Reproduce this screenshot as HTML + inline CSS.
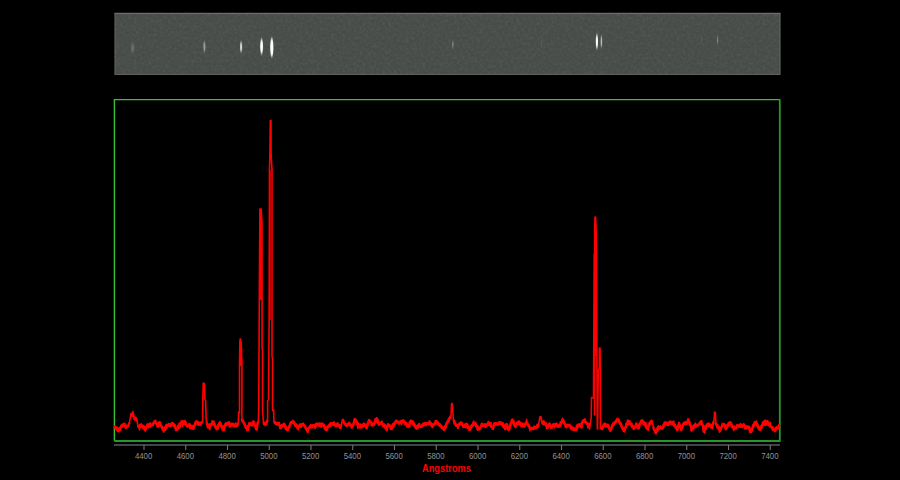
<!DOCTYPE html>
<html><head><meta charset="utf-8"><style>
html,body{margin:0;padding:0;background:#000;width:900px;height:480px;overflow:hidden}
svg{display:block}
</style></head><body>
<svg width="900" height="480" viewBox="0 0 900 480">
<defs>
<filter id="b" x="-300%" y="-100%" width="700%" height="300%"><feGaussianBlur stdDeviation="0.6 1.8"/></filter>
<filter id="n" x="0" y="0" width="100%" height="100%" color-interpolation-filters="sRGB">
<feTurbulence type="fractalNoise" baseFrequency="0.35" numOctaves="2" seed="7" result="t"/>
<feColorMatrix in="t" type="matrix" values="0 0 0 0 1  0 0 0 0 1  0 0 0 0 1  0.9 0 0 0 -0.42" result="w"/>
<feColorMatrix in="t" type="matrix" values="0 0 0 0 0  0 0 0 0 0  0 0 0 0 0  -0.9 0 0 0 0.42" result="k"/>
<feComponentTransfer in="w" result="w2"><feFuncA type="linear" slope="0.16"/></feComponentTransfer>
<feComponentTransfer in="k" result="k2"><feFuncA type="linear" slope="0.16"/></feComponentTransfer>
<feMerge><feMergeNode in="w2"/><feMergeNode in="k2"/></feMerge>
</filter>
</defs>
<rect x="0" y="0" width="900" height="480" fill="#000"/>
<rect x="114.6" y="12.9" width="665.8" height="62.1" fill="#4a4e4a"/>
<rect x="114.6" y="12.9" width="665.8" height="62.1" fill="#000" filter="url(#n)"/>
<rect x="115.1" y="13.4" width="664.8" height="61.1" fill="none" stroke="#5e625e" stroke-width="1"/>
<rect x="114.6" y="12.9" width="665.8" height="1.2" fill="#6a6e6a"/>
<ellipse cx="132.6" cy="48" rx="1.8" ry="4.5" fill="#fff" opacity="0.16" filter="url(#b)"/><ellipse cx="204.4" cy="46.8" rx="1.0" ry="5" fill="#fff" opacity="0.45" filter="url(#b)"/><ellipse cx="241.1" cy="47" rx="1.1" ry="5" fill="#fff" opacity="0.75" filter="url(#b)"/><ellipse cx="261.6" cy="46.5" rx="1.4" ry="7.5" fill="#fff" opacity="1.0" filter="url(#b)"/><ellipse cx="271.8" cy="47.5" rx="1.6" ry="9.5" fill="#fff" opacity="1.0" filter="url(#b)"/><ellipse cx="452.8" cy="44.5" rx="0.8" ry="3.5" fill="#fff" opacity="0.3" filter="url(#b)"/><ellipse cx="541.7" cy="42" rx="0.5" ry="3.5" fill="#fff" opacity="0.12" filter="url(#b)"/><ellipse cx="596.9" cy="41.5" rx="1.1" ry="7" fill="#fff" opacity="1.0" filter="url(#b)"/><ellipse cx="601.4" cy="41.5" rx="0.8" ry="5.5" fill="#fff" opacity="0.6" filter="url(#b)"/><ellipse cx="701.7" cy="40" rx="0.5" ry="3" fill="#fff" opacity="0.12" filter="url(#b)"/><ellipse cx="717.6" cy="40" rx="0.6" ry="4" fill="#fff" opacity="0.3" filter="url(#b)"/>
<path d="M114.4 441 V99.6 H780" fill="none" stroke="#36c236" stroke-width="1.4"/>
<path d="M114.4 441 H779.8 V99.6" fill="none" stroke="#289628" stroke-width="1.8"/>
<path d="M114.50 428.30 L114.92 426.56 L115.33 428.22 L115.75 427.50 L116.16 429.35 L116.57 428.20 L116.98 427.89 L117.39 430.06 L117.80 430.80 L118.22 431.27 L118.65 431.92 L119.08 429.04 L119.50 430.40 L119.92 427.70 L120.35 428.95 L120.78 427.52 L121.20 425.80 L121.73 427.37 L122.27 426.45 L122.80 425.00 L123.22 424.57 L123.65 424.05 L124.08 427.15 L124.50 423.75 L124.92 424.79 L125.33 425.57 L125.75 427.90 L126.16 426.20 L126.57 427.35 L126.98 427.08 L127.39 426.17 L127.80 426.25 L128.22 425.24 L128.65 424.70 L129.07 424.27 L129.50 422.50 L130.80 414.80 L131.35 415.62 L131.90 413.80 L132.37 414.05 L132.83 411.65 L133.30 413.80 L134.10 419.20 L134.51 419.82 L134.93 417.05 L135.34 418.32 L135.75 418.30 L136.17 417.36 L136.58 419.97 L137.00 420.80 L138.25 427.50 L138.66 426.07 L139.07 426.76 L139.48 429.96 L139.89 425.44 L140.30 425.00 L140.72 426.14 L141.13 423.68 L141.55 425.05 L141.97 426.33 L142.38 425.56 L142.80 425.80 L143.23 426.67 L143.65 426.77 L144.07 425.87 L144.50 428.18 L144.93 426.95 L145.35 430.60 L145.77 428.17 L146.20 429.20 L147.00 424.20 L147.42 425.29 L147.83 424.74 L148.25 426.14 L148.67 424.54 L149.08 426.73 L149.50 425.80 L149.92 425.52 L150.33 427.05 L150.75 426.15 L151.17 425.44 L151.58 424.20 L152.00 425.00 L152.41 425.40 L152.82 424.51 L153.24 425.40 L153.65 422.45 L154.06 423.04 L154.48 422.46 L154.89 421.66 L155.30 420.80 L155.72 422.03 L156.13 422.99 L156.55 423.03 L156.97 423.52 L157.38 425.24 L157.80 426.70 L158.23 426.26 L158.65 426.21 L159.07 424.42 L159.50 422.10 L159.92 424.26 L160.33 424.83 L160.75 425.64 L161.17 425.92 L161.58 427.53 L162.00 427.50 L162.42 430.21 L162.84 428.27 L163.26 428.41 L163.68 432.17 L164.10 430.40 L164.52 429.77 L164.94 429.73 L165.36 428.69 L165.78 425.36 L166.20 425.80 L166.61 428.52 L167.02 427.53 L167.44 425.41 L167.85 425.90 L168.26 424.95 L168.68 423.54 L169.09 424.27 L169.50 424.20 L169.92 424.50 L170.33 425.24 L170.75 424.60 L171.17 423.67 L171.58 425.08 L172.00 423.30 L172.43 422.81 L172.85 425.10 L173.27 425.91 L173.70 425.00 L174.11 425.31 L174.53 424.17 L174.94 425.88 L175.36 427.91 L175.77 428.92 L176.19 430.80 L176.60 429.60 L177.02 427.81 L177.44 428.44 L177.86 428.64 L178.28 427.09 L178.70 426.70 L179.12 423.16 L179.53 426.27 L179.95 427.37 L180.37 425.11 L180.78 422.10 L181.20 422.50 L181.60 422.21 L182.00 423.17 L182.40 426.09 L182.80 423.30 L183.22 423.63 L183.64 422.62 L184.06 423.94 L184.48 421.56 L184.90 421.25 L185.32 424.62 L185.75 422.70 L186.18 424.09 L186.60 425.80 L187.02 426.51 L187.44 427.19 L187.86 426.10 L188.28 425.52 L188.70 425.00 L189.10 423.64 L189.50 425.79 L189.90 426.74 L190.30 428.30 L190.73 427.03 L191.15 427.75 L191.57 426.02 L192.00 425.80 L192.42 427.73 L192.83 427.87 L193.25 428.75 L193.66 427.26 L194.07 426.71 L194.48 425.99 L194.89 425.42 L195.30 423.30 L195.72 422.53 L196.13 422.62 L196.55 421.06 L196.97 424.42 L197.38 424.04 L197.80 422.10 L198.23 422.41 L198.65 422.58 L199.07 422.19 L199.50 424.20 L199.93 423.98 L200.35 423.60 L200.77 425.54 L201.20 422.50 L201.63 422.63 L202.07 421.23 L202.50 422.00 L202.65 421.00 L202.80 399.00 L203.20 383.00 L204.50 384.00 L204.80 399.00 L205.70 401.00 L205.90 413.00 L206.50 423.00 L206.94 421.19 L207.38 426.94 L207.81 426.60 L208.25 427.50 L208.66 425.07 L209.07 426.72 L209.48 424.07 L209.89 429.68 L210.30 425.00 L210.72 425.93 L211.13 424.85 L211.55 423.54 L211.97 420.77 L212.38 422.76 L212.80 422.50 L213.23 421.06 L213.65 424.07 L214.07 421.21 L214.50 424.20 L214.93 423.94 L215.35 427.31 L215.77 428.65 L216.20 427.50 L216.60 426.50 L217.00 426.49 L217.40 428.75 L217.82 428.76 L218.23 427.69 L218.65 424.44 L219.07 423.75 L219.48 422.71 L219.90 422.50 L220.32 422.07 L220.74 423.68 L221.16 427.00 L221.58 427.33 L222.00 427.50 L222.42 430.53 L222.83 428.53 L223.25 429.20 L223.66 428.20 L224.07 426.34 L224.48 426.53 L224.89 424.26 L225.30 425.00 L225.72 422.52 L226.13 425.14 L226.55 425.68 L226.97 424.60 L227.38 424.85 L227.80 422.90 L228.22 423.69 L228.63 423.00 L229.05 424.45 L229.47 424.38 L229.88 423.98 L230.30 425.80 L230.73 423.57 L231.15 423.62 L231.57 425.19 L232.00 425.00 L232.42 425.18 L232.83 424.43 L233.25 426.71 L233.67 425.21 L234.08 425.70 L234.50 425.00 L234.92 426.60 L235.33 424.28 L235.75 423.04 L236.17 426.44 L236.58 424.84 L237.00 425.80 L237.43 426.44 L237.87 424.34 L238.30 423.00 L238.60 413.00 L239.50 412.00 L239.50 366.00 L239.80 345.00 L240.10 339.00 L240.50 339.00 L241.40 345.00 L241.90 366.00 L241.90 419.00 L242.33 420.54 L242.77 420.58 L243.20 420.00 L243.40 423.50 L243.88 421.58 L244.35 425.51 L244.83 424.42 L245.30 425.80 L245.72 425.73 L246.14 426.96 L246.56 429.24 L246.98 430.22 L247.40 430.00 L247.82 430.05 L248.24 425.69 L248.66 425.81 L249.08 422.51 L249.50 424.20 L249.92 424.24 L250.34 425.24 L250.76 423.76 L251.18 425.13 L251.60 425.00 L252.02 424.79 L252.43 425.24 L252.85 422.56 L253.27 422.07 L253.68 421.67 L254.10 422.10 L254.52 425.62 L254.94 426.25 L255.36 426.21 L255.78 428.05 L256.20 429.20 L256.61 427.84 L257.02 426.44 L257.43 424.45 L257.84 422.80 L258.25 421.70 L258.75 406.00 L259.30 300.00 L259.90 209.00 L261.20 209.00 L262.00 225.00 L262.10 349.00 L262.50 350.00 L262.50 412.00 L263.50 422.00 L264.10 424.20 L264.51 422.47 L264.93 422.98 L265.34 425.51 L265.75 423.30 L266.16 423.12 L266.57 421.73 L266.99 420.57 L267.40 420.00 L267.60 418.00 L267.60 401.00 L268.50 400.00 L268.85 357.00 L269.15 320.00 L269.50 170.00 L269.90 153.00 L270.30 120.50 L271.00 120.50 L271.05 153.00 L272.00 170.00 L272.00 357.00 L272.50 358.00 L272.50 410.00 L273.10 410.58 L273.70 411.00 L273.90 422.00 L274.10 422.50 L274.52 423.26 L274.94 422.40 L275.36 423.76 L275.78 424.15 L276.20 424.20 L276.62 423.30 L277.03 423.25 L277.45 423.00 L277.87 422.92 L278.28 425.27 L278.70 424.20 L279.10 422.39 L279.50 425.93 L279.90 426.54 L280.30 428.30 L280.73 427.04 L281.15 427.39 L281.57 428.12 L282.00 426.34 L282.43 425.57 L282.85 424.49 L283.27 424.56 L283.70 424.20 L284.11 425.94 L284.52 425.02 L284.93 424.76 L285.34 425.26 L285.76 426.09 L286.17 426.40 L286.58 430.03 L286.99 429.78 L287.40 430.00 L287.81 428.89 L288.23 430.09 L288.64 426.72 L289.06 427.59 L289.47 426.82 L289.89 423.17 L290.30 424.20 L290.73 421.71 L291.15 421.84 L291.57 423.41 L292.00 421.70 L292.43 423.26 L292.85 420.23 L293.27 422.96 L293.70 421.70 L294.10 422.27 L294.50 423.28 L294.90 424.11 L295.30 425.80 L295.73 425.52 L296.15 423.84 L296.57 424.94 L297.00 424.77 L297.43 426.95 L297.85 428.98 L298.27 429.87 L298.70 426.70 L299.11 425.98 L299.52 424.01 L299.94 425.27 L300.35 424.32 L300.76 427.52 L301.18 425.51 L301.59 423.64 L302.00 424.20 L302.42 425.59 L302.83 425.38 L303.25 423.05 L303.67 424.63 L304.08 425.25 L304.50 425.80 L304.93 426.67 L305.35 427.66 L305.77 427.94 L306.20 429.20 L306.60 430.25 L307.00 430.15 L307.40 430.60 L307.80 432.50 L309.10 426.70 L309.51 428.52 L309.93 427.13 L310.34 427.23 L310.76 424.79 L311.17 426.50 L311.59 427.68 L312.00 426.70 L312.42 425.00 L312.83 427.72 L313.25 425.78 L313.67 426.58 L314.08 425.79 L314.50 425.80 L314.92 425.80 L315.33 426.71 L315.75 424.52 L316.17 426.61 L316.58 423.53 L317.00 424.20 L317.41 423.18 L317.82 425.25 L318.24 423.22 L318.65 424.16 L319.06 425.79 L319.48 426.25 L319.89 422.77 L320.30 425.00 L320.73 425.61 L321.15 427.26 L321.57 426.43 L322.00 424.71 L322.43 424.28 L322.85 424.64 L323.27 423.62 L323.70 425.00 L324.10 425.73 L324.50 426.88 L324.90 427.98 L325.30 429.20 L325.72 430.34 L326.13 428.36 L326.55 426.60 L326.97 429.33 L327.38 426.50 L327.80 427.50 L328.22 426.38 L328.63 426.17 L329.05 425.34 L329.47 423.96 L329.88 424.28 L330.30 424.00 L330.72 426.49 L331.13 423.01 L331.55 423.44 L331.97 424.82 L332.38 424.23 L332.80 423.20 L333.22 424.42 L333.63 424.83 L334.05 421.74 L334.47 423.36 L334.88 424.85 L335.30 425.00 L335.73 425.60 L336.15 426.55 L336.57 425.56 L337.00 424.71 L337.43 425.05 L337.85 424.75 L338.27 425.30 L338.70 425.00 L339.12 426.09 L339.53 425.16 L339.95 424.87 L340.37 425.11 L340.78 427.73 L341.20 426.70 L342.40 419.60 L342.82 421.86 L343.25 422.24 L343.68 422.80 L344.10 422.50 L344.70 424.35 L345.30 424.20 L345.73 424.60 L346.15 425.80 L346.57 424.14 L347.00 425.80 L347.42 425.14 L347.83 424.09 L348.25 425.42 L348.67 423.44 L349.08 423.59 L349.50 423.30 L349.92 424.48 L350.33 426.33 L350.75 424.45 L351.17 424.97 L351.58 427.78 L352.00 427.50 L352.42 425.34 L352.83 426.38 L353.25 425.00 L353.66 422.87 L354.07 421.97 L354.49 418.46 L354.90 419.20 L355.32 420.72 L355.74 419.92 L356.16 420.10 L356.58 424.33 L357.00 422.50 L357.43 424.18 L357.85 428.36 L358.27 425.46 L358.70 425.80 L359.12 425.53 L359.53 426.23 L359.95 428.18 L360.37 426.37 L360.78 427.09 L361.20 426.70 L361.61 427.01 L362.02 424.98 L362.44 425.92 L362.85 424.85 L363.26 423.64 L363.68 425.87 L364.09 425.31 L364.50 424.20 L364.92 425.11 L365.34 424.75 L365.76 424.25 L366.18 428.06 L366.60 428.30 L367.02 426.80 L367.43 423.51 L367.85 424.08 L368.27 420.94 L368.68 421.35 L369.10 420.00 L369.52 420.83 L369.94 421.75 L370.36 422.24 L370.78 422.85 L371.20 423.30 L371.62 422.22 L372.03 423.41 L372.45 423.54 L372.87 424.15 L373.28 425.04 L373.70 425.00 L374.11 424.79 L374.53 425.05 L374.94 419.05 L375.36 421.65 L375.77 419.98 L376.19 421.99 L376.60 418.30 L377.02 420.60 L377.44 418.68 L377.86 422.32 L378.28 422.40 L378.70 424.20 L379.12 425.11 L379.53 422.37 L379.95 423.23 L380.37 422.91 L380.78 422.67 L381.20 422.50 L381.62 422.22 L382.03 421.13 L382.45 424.30 L382.87 425.37 L383.28 424.50 L383.70 425.00 L384.12 424.20 L384.53 426.08 L384.95 426.93 L385.37 426.46 L385.78 427.07 L386.20 427.50 L386.62 428.77 L387.03 425.32 L387.45 425.58 L387.87 423.55 L388.28 424.58 L388.70 425.00 L389.12 424.66 L389.53 424.95 L389.95 425.82 L390.37 429.36 L390.78 427.51 L391.20 428.30 L391.62 427.48 L392.03 429.57 L392.45 426.18 L392.87 423.49 L393.28 425.37 L393.70 424.20 L394.11 422.71 L394.52 425.43 L394.94 421.60 L395.35 422.03 L395.76 420.43 L396.18 422.10 L396.59 420.40 L397.00 421.25 L397.42 421.51 L397.83 421.48 L398.25 421.54 L398.67 423.75 L399.08 424.08 L399.50 423.30 L399.91 423.06 L400.32 421.59 L400.74 421.08 L401.15 422.37 L401.56 424.61 L401.98 420.88 L402.39 420.17 L402.80 420.80 L403.23 420.39 L403.65 420.34 L404.07 420.91 L404.50 422.25 L404.93 424.65 L405.35 423.35 L405.77 423.16 L406.20 424.20 L406.62 422.68 L407.03 425.29 L407.45 425.42 L407.87 424.39 L408.28 424.98 L408.70 426.70 L409.12 425.67 L409.53 425.95 L409.95 424.50 L410.37 423.01 L410.78 421.40 L411.20 420.80 L411.62 421.60 L412.03 421.62 L412.45 424.66 L412.87 421.11 L413.28 422.44 L413.70 423.30 L414.12 425.66 L414.53 424.65 L414.95 427.51 L415.37 426.58 L415.78 427.64 L416.20 428.30 L416.62 427.31 L417.03 425.54 L417.45 425.49 L417.87 428.76 L418.28 426.32 L418.70 425.00 L419.12 426.01 L419.53 426.71 L419.95 426.53 L420.37 427.36 L420.78 426.10 L421.20 426.70 L421.62 426.02 L422.03 427.05 L422.45 425.03 L422.87 423.44 L423.28 424.35 L423.70 424.20 L424.11 423.43 L424.52 424.71 L424.94 423.00 L425.35 422.48 L425.76 423.24 L426.18 425.39 L426.59 423.35 L427.00 423.30 L427.41 423.39 L427.82 423.11 L428.24 423.35 L428.65 424.01 L429.06 424.47 L429.48 420.73 L429.89 424.23 L430.30 422.50 L430.72 423.05 L431.13 423.22 L431.55 427.03 L431.97 424.50 L432.38 427.58 L432.80 425.80 L433.22 426.55 L433.64 423.74 L434.06 425.16 L434.48 425.04 L434.90 423.60 L435.32 420.55 L435.74 422.52 L436.16 422.29 L436.58 420.78 L437.00 421.70 L437.43 424.52 L437.85 422.66 L438.27 423.10 L438.70 424.20 L439.12 424.26 L439.53 424.09 L439.95 424.52 L440.37 425.98 L440.78 426.66 L441.20 426.70 L441.61 426.56 L442.03 427.53 L442.44 426.45 L442.86 429.21 L443.27 428.16 L443.69 429.79 L444.10 430.00 L444.51 427.84 L444.93 427.24 L445.34 427.04 L445.76 424.26 L446.17 427.61 L446.59 423.53 L447.00 422.50 L447.42 421.71 L447.83 420.22 L448.25 422.31 L448.67 421.36 L449.08 419.36 L449.50 418.30 L450.00 416.12 L450.50 416.63 L451.00 416.70 L451.60 403.30 L452.40 404.20 L452.80 411.70 L453.70 421.70 L454.12 423.12 L454.53 422.45 L454.95 422.33 L455.37 423.01 L455.78 424.19 L456.20 425.80 L456.62 425.68 L457.03 424.75 L457.45 425.42 L457.87 428.62 L458.28 427.26 L458.70 425.00 L459.12 423.34 L459.53 424.58 L459.95 423.85 L460.37 423.17 L460.78 424.17 L461.20 422.50 L461.62 422.80 L462.03 423.51 L462.45 424.15 L462.87 425.18 L463.28 427.54 L463.70 426.70 L464.12 427.21 L464.53 424.26 L464.95 424.92 L465.37 424.08 L465.78 425.60 L466.20 424.20 L466.61 425.19 L467.02 426.72 L467.44 426.30 L467.85 424.81 L468.26 428.37 L468.68 428.82 L469.09 429.88 L469.50 430.00 L469.92 427.60 L470.33 428.43 L470.75 426.67 L471.17 425.84 L471.58 426.26 L472.00 425.00 L472.41 425.18 L472.83 423.44 L473.24 422.22 L473.66 421.06 L474.07 423.10 L474.49 424.89 L474.90 423.30 L475.32 424.07 L475.74 422.28 L476.16 424.78 L476.58 427.17 L477.00 427.50 L477.42 429.79 L477.83 429.47 L478.25 428.79 L478.67 428.87 L479.08 427.65 L479.50 429.20 L479.91 427.94 L480.33 427.37 L480.74 426.13 L481.16 426.42 L481.57 425.16 L481.99 425.32 L482.40 424.20 L482.81 426.28 L483.23 425.80 L483.64 425.77 L484.06 425.34 L484.47 424.16 L484.89 426.21 L485.30 426.70 L485.73 426.83 L486.15 424.44 L486.57 426.63 L487.00 424.20 L487.43 424.52 L487.85 423.16 L488.27 421.52 L488.70 422.50 L489.12 425.68 L489.53 422.51 L489.95 425.70 L490.37 424.63 L490.78 426.33 L491.20 426.70 L491.60 426.13 L492.00 427.00 L492.40 429.00 L492.80 428.30 L493.23 429.38 L493.65 424.78 L494.07 424.56 L494.50 423.30 L494.92 424.59 L495.33 422.84 L495.75 424.60 L496.17 422.96 L496.58 424.77 L497.00 424.20 L497.42 424.54 L497.83 425.28 L498.25 424.07 L498.67 422.01 L499.08 424.05 L499.50 421.74 L499.92 423.78 L500.33 424.50 L500.75 422.50 L501.17 423.57 L501.59 422.55 L502.01 425.00 L502.44 424.13 L502.86 422.79 L503.28 424.22 L503.70 425.00 L504.10 427.75 L504.50 426.74 L504.90 428.30 L505.30 429.20 L505.73 427.12 L506.17 423.84 L506.60 424.20 L507.02 424.75 L507.44 426.95 L507.86 427.93 L508.28 428.63 L508.70 430.00 L509.11 426.10 L509.52 428.79 L509.93 426.84 L510.34 425.87 L510.75 423.30 L511.16 423.94 L511.57 420.92 L511.99 419.80 L512.40 419.60 L512.81 420.99 L513.23 423.64 L513.64 420.62 L514.06 423.38 L514.47 423.81 L514.89 426.36 L515.30 426.70 L515.72 427.62 L516.14 424.66 L516.56 422.69 L516.98 423.40 L517.40 422.50 L517.81 422.40 L518.23 421.13 L518.64 424.29 L519.06 422.84 L519.47 424.53 L519.89 422.38 L520.30 424.20 L520.72 425.72 L521.15 422.87 L521.58 426.06 L522.00 422.83 L522.42 426.86 L522.85 424.95 L523.28 423.73 L523.70 425.80 L524.11 425.11 L524.53 425.38 L524.94 423.37 L525.35 423.56 L525.76 424.06 L526.17 423.12 L526.59 419.23 L527.00 422.50 L527.42 422.82 L527.83 424.68 L528.25 425.36 L528.67 427.04 L529.08 425.84 L529.50 427.50 L529.92 430.70 L530.33 428.73 L530.75 428.27 L531.17 429.34 L531.58 429.31 L532.00 428.30 L532.42 428.42 L532.83 427.56 L533.25 429.53 L533.67 428.81 L534.08 426.03 L534.50 428.30 L534.92 426.71 L535.33 428.33 L535.75 427.63 L536.17 427.57 L536.58 427.74 L537.00 426.70 L537.42 426.25 L537.85 427.35 L538.28 424.12 L538.70 424.20 L539.90 416.70 L540.33 417.05 L540.77 418.75 L541.20 419.20 L542.00 423.30 L542.42 424.03 L542.84 423.93 L543.26 424.61 L543.68 422.09 L544.10 422.50 L544.52 424.56 L544.94 424.38 L545.36 423.23 L545.78 424.98 L546.20 425.80 L546.61 428.72 L547.02 427.58 L547.43 426.50 L547.84 424.60 L548.25 427.90 L549.10 423.30 L549.51 423.02 L549.93 423.66 L550.34 425.19 L550.76 428.47 L551.17 427.20 L551.59 427.28 L552.00 427.50 L552.42 425.55 L552.85 424.43 L553.28 424.78 L553.70 424.20 L554.11 423.74 L554.53 428.01 L554.94 424.01 L555.35 423.86 L555.76 426.05 L556.17 424.89 L556.59 423.42 L557.00 425.00 L557.42 426.97 L557.85 425.48 L558.28 424.68 L558.70 426.70 L559.12 426.52 L559.53 426.15 L559.95 424.59 L560.37 425.27 L560.78 424.85 L561.20 423.30 L561.61 421.58 L562.02 419.51 L562.43 418.45 L562.84 420.51 L563.25 420.00 L563.66 422.53 L564.08 423.30 L564.49 424.82 L564.90 424.20 L565.33 427.26 L565.77 425.89 L566.20 426.70 L566.62 427.68 L567.03 424.30 L567.45 426.68 L567.87 426.04 L568.28 425.17 L568.70 425.00 L569.12 424.89 L569.53 424.49 L569.95 426.42 L570.37 428.20 L570.78 426.64 L571.20 427.50 L571.61 428.39 L572.02 427.20 L572.43 428.55 L572.84 427.29 L573.25 429.20 L573.66 428.74 L574.07 429.63 L574.48 428.77 L574.89 428.34 L575.30 430.00 L575.72 429.08 L576.15 430.19 L576.58 430.32 L577.00 427.51 L577.42 428.33 L577.85 427.76 L578.28 426.80 L578.70 425.80 L579.11 423.84 L579.53 425.99 L579.94 424.34 L580.35 426.81 L580.76 426.25 L581.17 425.94 L581.59 422.06 L582.00 425.00 L582.80 420.00 L583.22 421.03 L583.63 421.41 L584.05 419.32 L584.47 422.30 L584.88 421.51 L585.30 421.70 L585.72 421.98 L586.14 421.84 L586.56 421.98 L586.98 423.18 L587.40 424.20 L587.83 427.60 L588.27 423.84 L588.70 423.30 L589.50 429.00 L591.20 418.00 L591.50 397.50 L593.50 398.00 L594.20 254.00 L594.30 356.00 L594.50 415.00 L594.70 231.00 L595.00 217.00 L595.60 217.00 L596.10 231.00 L596.50 254.00 L596.85 356.00 L597.30 429.00 L597.60 429.00 L598.30 370.00 L599.30 368.00 L599.35 348.00 L600.00 348.00 L600.40 368.00 L600.50 427.00 L600.90 427.75 L601.30 427.22 L601.70 427.76 L602.10 429.00 L602.52 427.38 L602.94 426.02 L603.36 427.17 L603.78 424.84 L604.20 424.20 L604.62 425.37 L605.03 423.08 L605.45 425.71 L605.87 424.70 L606.28 425.67 L606.70 425.00 L607.11 425.22 L607.52 424.61 L607.93 427.47 L608.34 425.84 L608.75 426.70 L609.16 427.55 L609.58 427.69 L609.99 430.02 L610.40 430.80 L610.82 429.17 L611.24 428.82 L611.66 427.73 L612.08 425.33 L612.50 425.00 L612.92 422.89 L613.33 424.69 L613.75 424.85 L614.17 424.17 L614.58 421.54 L615.00 422.50 L615.41 422.87 L615.83 422.25 L616.24 421.77 L616.66 421.59 L617.07 420.33 L617.49 420.61 L617.90 420.00 L618.32 421.77 L618.74 420.71 L619.16 420.25 L619.58 422.51 L620.00 423.30 L620.42 424.39 L620.85 422.79 L621.28 425.04 L621.70 426.70 L622.12 428.09 L622.53 427.89 L622.95 428.86 L623.37 427.92 L623.78 431.20 L624.20 430.80 L624.61 431.87 L625.03 428.49 L625.44 426.81 L625.85 425.26 L626.26 426.68 L626.67 424.70 L627.09 422.58 L627.50 422.50 L627.92 424.09 L628.33 423.68 L628.75 423.62 L629.17 420.92 L629.58 423.04 L630.00 423.30 L630.42 424.62 L630.83 422.96 L631.25 426.11 L631.67 427.28 L632.08 427.37 L632.50 426.70 L632.92 426.15 L633.34 426.49 L633.76 428.79 L634.18 429.17 L634.60 428.30 L635.80 423.30 L636.22 425.78 L636.64 426.74 L637.06 426.18 L637.48 426.81 L637.90 428.30 L638.32 425.24 L638.74 427.57 L639.17 428.53 L639.59 424.41 L640.01 423.56 L640.43 424.08 L640.86 422.92 L641.28 419.99 L641.70 420.80 L642.11 420.26 L642.53 420.11 L642.94 424.16 L643.35 421.19 L643.76 423.39 L644.17 424.98 L644.59 425.26 L645.00 423.30 L645.42 425.99 L645.83 427.22 L646.25 424.77 L646.67 426.82 L647.08 427.34 L647.50 429.20 L647.92 427.74 L648.33 430.11 L648.75 423.84 L649.17 425.40 L649.58 422.13 L650.00 422.50 L650.42 423.77 L650.84 423.38 L651.26 420.87 L651.68 423.62 L652.10 420.80 L653.30 426.70 L653.72 427.89 L654.13 430.46 L654.55 430.37 L654.97 430.43 L655.38 431.74 L655.80 433.30 L656.22 431.91 L656.65 431.54 L657.08 429.70 L657.50 428.30 L657.92 431.00 L658.33 427.80 L658.75 427.34 L659.17 426.90 L659.58 426.70 L660.00 427.50 L660.42 425.91 L660.83 426.58 L661.25 428.99 L661.67 428.11 L662.08 427.96 L662.50 428.30 L662.92 427.75 L663.33 427.65 L663.75 426.14 L664.17 425.36 L664.58 422.80 L665.00 422.50 L665.42 422.60 L665.83 422.40 L666.25 423.63 L666.67 423.19 L667.08 424.14 L667.50 425.00 L667.92 424.24 L668.33 423.64 L668.75 423.03 L669.17 422.21 L669.58 423.82 L670.00 421.70 L670.42 421.71 L670.83 421.32 L671.25 423.18 L671.67 422.06 L672.08 422.50 L672.50 424.20 L672.92 424.57 L673.33 422.73 L673.75 421.14 L674.17 425.61 L674.58 426.77 L675.00 425.80 L675.42 424.63 L675.84 426.40 L676.26 429.01 L676.68 426.78 L677.10 430.00 L677.52 427.61 L677.94 425.88 L678.36 425.74 L678.78 422.27 L679.20 423.30 L679.61 425.71 L680.02 425.81 L680.43 427.68 L680.84 428.27 L681.25 430.00 L681.66 426.29 L682.07 427.50 L682.48 424.91 L682.89 425.37 L683.30 424.20 L683.72 423.03 L684.13 423.52 L684.55 423.50 L684.97 424.53 L685.38 424.37 L685.80 423.30 L686.22 421.74 L686.64 422.57 L687.06 423.98 L687.49 422.46 L687.91 420.64 L688.33 421.01 L688.75 420.80 L689.16 421.43 L689.58 424.03 L689.99 423.99 L690.40 425.00 L690.83 427.12 L691.27 430.99 L691.70 430.00 L692.12 427.65 L692.53 427.38 L692.95 425.82 L693.37 425.29 L693.78 427.53 L694.20 425.80 L694.61 426.05 L695.03 427.56 L695.44 423.13 L695.85 424.34 L696.26 427.03 L696.67 426.44 L697.09 426.16 L697.50 425.00 L697.91 425.63 L698.33 424.21 L698.74 423.75 L699.15 423.39 L699.56 423.95 L699.97 422.33 L700.39 422.50 L700.80 421.70 L701.22 424.27 L701.65 422.00 L702.08 423.27 L702.50 425.00 L702.92 427.35 L703.35 428.03 L703.78 429.84 L704.20 431.70 L704.62 433.10 L705.03 429.97 L705.45 427.85 L705.87 428.55 L706.28 429.14 L706.70 425.00 L707.12 423.54 L707.53 423.93 L707.95 424.74 L708.37 423.70 L708.78 426.94 L709.20 424.20 L709.62 425.38 L710.03 424.82 L710.45 426.44 L710.87 425.44 L711.28 426.22 L711.70 427.50 L712.11 426.63 L712.52 428.37 L712.93 421.80 L713.34 424.00 L713.75 422.50 L714.60 412.10 L715.40 413.30 L715.80 422.50 L716.22 425.09 L716.63 425.32 L717.05 427.71 L717.47 426.91 L717.88 427.51 L718.30 428.30 L718.72 428.77 L719.15 428.52 L719.58 432.14 L720.00 430.80 L720.42 428.36 L720.85 428.60 L721.28 427.10 L721.70 426.70 L722.12 425.34 L722.53 423.20 L722.95 424.99 L723.37 425.20 L723.78 424.79 L724.20 424.20 L724.73 426.88 L725.27 427.34 L725.80 429.20 L726.22 427.75 L726.64 428.21 L727.06 427.96 L727.48 425.40 L727.90 425.80 L728.32 423.32 L728.74 423.25 L729.16 425.09 L729.58 424.36 L730.00 422.50 L730.42 422.14 L730.83 424.03 L731.25 425.61 L731.67 426.89 L732.08 425.21 L732.50 426.70 L732.92 426.68 L733.33 428.92 L733.75 430.39 L734.17 429.60 L734.58 426.66 L735.00 428.30 L735.42 428.29 L735.83 426.84 L736.25 426.58 L736.67 425.30 L737.08 424.97 L737.50 425.00 L737.92 425.12 L738.33 427.43 L738.75 426.24 L739.17 426.05 L739.58 425.70 L740.00 425.80 L740.41 424.80 L740.83 425.32 L741.24 426.99 L741.65 426.40 L742.06 427.66 L742.47 425.51 L742.89 425.08 L743.30 425.00 L743.72 423.61 L744.13 426.58 L744.55 424.58 L744.97 429.03 L745.38 426.99 L745.80 428.30 L746.22 428.03 L746.63 426.15 L747.05 426.90 L747.47 426.12 L747.88 428.32 L748.30 426.70 L748.72 427.71 L749.14 426.71 L749.56 426.53 L749.99 429.48 L750.41 429.69 L750.83 429.65 L751.25 431.70 L751.66 431.07 L752.07 428.80 L752.48 427.81 L752.89 425.63 L753.30 425.00 L753.72 423.90 L754.13 423.61 L754.55 421.83 L754.97 424.09 L755.38 423.40 L755.80 422.50 L756.22 421.13 L756.63 424.02 L757.05 425.99 L757.47 425.58 L757.88 427.56 L758.30 426.70 L758.72 427.20 L759.15 428.35 L759.58 427.62 L760.00 430.00 L760.42 427.95 L760.83 425.88 L761.25 426.03 L761.67 426.43 L762.08 425.79 L762.50 424.20 L762.92 425.41 L763.33 423.98 L763.75 422.45 L764.17 423.96 L764.58 423.08 L765.00 425.21 L765.42 425.23 L765.83 423.84 L766.25 422.50 L766.67 421.38 L767.09 422.36 L767.51 423.46 L767.94 422.62 L768.36 424.34 L768.78 424.78 L769.20 424.20 L769.62 425.76 L770.03 425.57 L770.45 424.79 L770.87 425.39 L771.28 426.80 L771.70 427.50 L772.11 429.46 L772.53 430.11 L772.94 429.76 L773.35 429.39 L773.76 430.12 L774.17 430.66 L774.59 431.59 L775.00 430.40 L775.42 430.81 L775.83 427.32 L776.25 429.69 L776.67 428.40 L777.08 426.76 L777.50 426.70 L777.90 427.33 L778.30 427.05 L778.70 426.64 L779.10 424.67 L779.50 426.70" fill="none" stroke="#ff0000" stroke-width="1.6" stroke-linejoin="round"/>
<g fill="#ff0000"><rect x="259.5" y="215" width="2.3" height="85"/><rect x="270.0" y="170" width="1.3" height="150" fill="#c00000"/><rect x="594.5" y="231" width="2.1" height="125"/><rect x="239.5" y="341" width="2" height="25"/></g>
<path d="M114.50 428.30 L115.12 426.84 L115.75 427.50 L116.26 427.29 L116.78 429.75 L117.29 427.91 L117.80 430.80 L118.37 430.54 L118.93 428.50 L119.50 430.40 L120.07 429.86 L120.63 427.52 L121.20 425.80 L121.73 426.75 L122.27 424.81 L122.80 425.00 L123.37 424.94 L123.93 423.91 L124.50 423.75 L125.12 425.16 L125.75 427.90 L126.26 427.62 L126.78 425.94 L127.29 426.34 L127.80 426.25 L128.37 425.63 L128.93 423.80 L129.50 422.50M130.80 414.80 L131.35 413.93 L131.90 413.80 L132.60 415.77 L133.30 413.80M134.10 419.20 L134.65 418.95 L135.20 418.07 L135.75 418.30 L136.38 419.69 L137.00 420.80M138.25 427.50 L138.76 426.40 L139.28 425.90 L139.79 425.31 L140.30 425.00 L140.80 426.98 L141.30 425.34 L141.80 425.64 L142.30 426.25 L142.80 425.80 L143.37 428.18 L143.93 426.73 L144.50 426.94 L145.07 430.29 L145.63 427.32 L146.20 429.20M147.00 424.20 L147.50 424.19 L148.00 425.44 L148.50 427.22 L149.00 424.63 L149.50 425.80 L150.00 423.46 L150.50 426.08 L151.00 424.85 L151.50 424.81 L152.00 425.00 L152.55 424.72 L153.10 423.80 L153.65 423.16 L154.20 421.81 L154.75 422.66 L155.30 420.80 L155.80 423.33 L156.30 423.19 L156.80 423.93 L157.30 426.18 L157.80 426.70 L158.37 425.60 L158.93 422.70 L159.50 422.10 L160.00 422.77 L160.50 425.20 L161.00 425.25 L161.50 426.12 L162.00 427.50 L162.53 428.42 L163.05 428.92 L163.57 429.67 L164.10 430.40 L164.62 427.51 L165.15 429.67 L165.67 427.13 L166.20 425.80 L166.75 424.74 L167.30 426.15 L167.85 425.28 L168.40 424.75 L168.95 425.41 L169.50 424.20 L170.00 426.05 L170.50 424.34 L171.00 425.09 L171.50 425.42 L172.00 423.30 L172.57 422.95 L173.13 423.96 L173.70 425.00 L174.28 426.62 L174.86 425.30 L175.44 427.52 L176.02 429.84 L176.60 429.60 L177.12 429.81 L177.65 428.67 L178.17 425.72 L178.70 426.70 L179.20 427.98 L179.70 425.52 L180.20 424.87 L180.70 423.79 L181.20 422.50 L181.73 421.22 L182.27 421.74 L182.80 423.30 L183.33 421.69 L183.85 424.00 L184.38 421.01 L184.90 421.25 L185.47 422.55 L186.03 424.05 L186.60 425.80 L187.12 426.11 L187.65 425.85 L188.17 425.44 L188.70 425.00 L189.23 424.96 L189.77 424.38 L190.30 428.30 L190.87 427.62 L191.43 426.87 L192.00 425.80 L192.62 428.38 L193.25 428.75 L193.76 427.29 L194.28 425.47 L194.79 425.03 L195.30 423.30 L195.80 421.66 L196.30 421.88 L196.80 421.67 L197.30 422.60 L197.80 422.10 L198.37 424.68 L198.93 424.19 L199.50 424.20 L200.07 424.66 L200.63 423.28 L201.20 422.50 L201.85 422.50 L202.50 422.00M206.50 423.00 L207.08 424.10 L207.67 425.75 L208.25 427.50 L208.76 424.69 L209.28 425.17 L209.79 424.47 L210.30 425.00 L210.80 425.25 L211.30 424.60 L211.80 424.53 L212.30 424.40 L212.80 422.50 L213.37 422.79 L213.93 424.58 L214.50 424.20 L215.07 427.06 L215.63 426.39 L216.20 427.50 L216.80 429.10 L217.40 428.75 L217.90 427.35 L218.40 424.80 L218.90 425.11 L219.40 423.01 L219.90 422.50 L220.43 423.85 L220.95 424.58 L221.47 426.54 L222.00 427.50 L222.62 426.43 L223.25 429.20 L223.76 430.03 L224.28 428.32 L224.79 425.73 L225.30 425.00 L225.80 423.76 L226.30 424.16 L226.80 424.35 L227.30 423.70 L227.80 422.90 L228.30 423.84 L228.80 422.29 L229.30 423.62 L229.80 426.43 L230.30 425.80 L230.87 425.75 L231.43 423.90 L232.00 425.00 L232.50 424.22 L233.00 423.70 L233.50 424.08 L234.00 426.06 L234.50 425.00 L235.00 424.96 L235.50 426.34 L236.00 425.65 L236.50 424.27 L237.00 425.80 L237.65 423.81 L238.30 423.00M238.60 413.00 L239.50 412.00M241.90 419.00 L242.55 421.59 L243.20 420.00M243.40 423.50 L244.03 423.57 L244.67 424.07 L245.30 425.80 L245.83 427.98 L246.35 427.98 L246.88 428.94 L247.40 430.00 L247.93 429.89 L248.45 425.49 L248.97 426.03 L249.50 424.20 L250.03 423.43 L250.55 423.31 L251.07 424.05 L251.60 425.00 L252.10 425.48 L252.60 423.71 L253.10 421.58 L253.60 421.66 L254.10 422.10 L254.62 425.28 L255.15 426.59 L255.67 426.42 L256.20 429.20 L256.71 429.55 L257.23 425.11 L257.74 422.48 L258.25 421.70M263.50 422.00 L264.10 424.20 L264.65 423.77 L265.20 424.46 L265.75 423.30 L266.30 423.68 L266.85 422.05 L267.40 420.00M272.50 410.00 L273.10 410.11 L273.70 411.00M274.10 422.50 L274.62 422.41 L275.15 422.01 L275.68 423.71 L276.20 424.20 L276.70 423.65 L277.20 424.43 L277.70 423.03 L278.20 423.72 L278.70 424.20 L279.23 424.76 L279.77 425.83 L280.30 428.30 L280.87 426.53 L281.43 426.00 L282.00 425.16 L282.57 426.09 L283.13 424.98 L283.70 424.20 L284.23 423.81 L284.76 426.33 L285.29 426.95 L285.81 428.86 L286.34 428.16 L286.87 428.98 L287.40 430.00 L287.98 428.21 L288.56 427.79 L289.14 426.97 L289.72 425.52 L290.30 424.20 L290.87 423.13 L291.43 423.05 L292.00 421.70 L292.57 421.78 L293.13 421.93 L293.70 421.70 L294.23 422.21 L294.77 424.62 L295.30 425.80 L295.87 425.03 L296.43 425.32 L297.00 426.40 L297.57 428.34 L298.13 427.47 L298.70 426.70 L299.25 426.29 L299.80 425.70 L300.35 426.36 L300.90 426.31 L301.45 425.74 L302.00 424.20 L302.50 424.35 L303.00 425.01 L303.50 424.86 L304.00 425.22 L304.50 425.80 L305.07 426.15 L305.63 427.84 L306.20 429.20 L306.73 428.32 L307.27 430.30 L307.80 432.50M309.10 426.70 L309.68 427.09 L310.26 425.85 L310.84 427.20 L311.42 425.51 L312.00 426.70 L312.50 426.18 L313.00 426.70 L313.50 425.20 L314.00 425.32 L314.50 425.80 L315.00 427.76 L315.50 424.53 L316.00 424.19 L316.50 423.99 L317.00 424.20 L317.55 424.36 L318.10 424.44 L318.65 425.51 L319.20 425.46 L319.75 424.50 L320.30 425.00 L320.87 424.67 L321.43 423.70 L322.00 423.62 L322.57 424.32 L323.13 425.67 L323.70 425.00 L324.23 426.51 L324.77 428.54 L325.30 429.20 L325.80 429.73 L326.30 428.37 L326.80 430.11 L327.30 427.36 L327.80 427.50 L328.30 426.22 L328.80 425.70 L329.30 426.45 L329.80 424.57 L330.30 424.00 L330.80 423.16 L331.30 424.08 L331.80 424.56 L332.30 423.26 L332.80 423.20 L333.30 423.33 L333.80 424.92 L334.30 425.18 L334.80 425.51 L335.30 425.00 L335.87 424.30 L336.43 425.26 L337.00 425.33 L337.57 423.35 L338.13 426.11 L338.70 425.00 L339.20 425.43 L339.70 425.37 L340.20 428.10 L340.70 426.49 L341.20 426.70M342.40 419.60 L342.97 419.90 L343.53 421.48 L344.10 422.50 L344.70 423.87 L345.30 424.20 L345.87 425.48 L346.43 425.21 L347.00 425.80 L347.50 424.51 L348.00 424.16 L348.50 423.55 L349.00 422.83 L349.50 423.30 L350.00 424.12 L350.50 424.53 L351.00 425.87 L351.50 425.90 L352.00 427.50 L352.62 425.45 L353.25 425.00 L353.80 422.90 L354.35 420.81 L354.90 419.20 L355.42 421.08 L355.95 420.02 L356.48 421.86 L357.00 422.50 L357.57 423.56 L358.13 423.50 L358.70 425.80 L359.20 426.65 L359.70 426.32 L360.20 424.41 L360.70 427.07 L361.20 426.70 L361.75 427.14 L362.30 425.13 L362.85 427.01 L363.40 425.18 L363.95 423.56 L364.50 424.20 L365.02 425.74 L365.55 425.92 L366.08 426.05 L366.60 428.30 L367.10 424.67 L367.60 425.21 L368.10 422.64 L368.60 422.25 L369.10 420.00 L369.62 421.18 L370.15 421.17 L370.68 421.99 L371.20 423.30 L371.70 425.26 L372.20 425.55 L372.70 425.01 L373.20 424.33 L373.70 425.00 L374.28 422.76 L374.86 421.96 L375.44 422.51 L376.02 420.06 L376.60 418.30 L377.12 419.51 L377.65 420.12 L378.18 422.88 L378.70 424.20 L379.20 423.05 L379.70 423.53 L380.20 423.86 L380.70 423.82 L381.20 422.50 L381.70 423.13 L382.20 423.19 L382.70 424.21 L383.20 426.15 L383.70 425.00 L384.20 425.84 L384.70 424.72 L385.20 427.92 L385.70 427.23 L386.20 427.50 L386.70 430.19 L387.20 426.07 L387.70 425.91 L388.20 425.23 L388.70 425.00 L389.20 426.01 L389.70 425.79 L390.20 425.63 L390.70 425.88 L391.20 428.30 L391.70 427.37 L392.20 426.19 L392.70 425.31 L393.20 426.96 L393.70 424.20 L394.25 424.44 L394.80 424.22 L395.35 422.27 L395.90 422.51 L396.45 421.55 L397.00 421.25 L397.50 421.47 L398.00 422.75 L398.50 423.03 L399.00 423.17 L399.50 423.30 L400.05 423.02 L400.60 421.15 L401.15 421.37 L401.70 421.98 L402.25 420.88 L402.80 420.80 L403.37 420.66 L403.93 422.26 L404.50 421.66 L405.07 422.45 L405.63 424.44 L406.20 424.20 L406.70 424.37 L407.20 426.51 L407.70 426.18 L408.20 426.94 L408.70 426.70 L409.20 426.55 L409.70 422.36 L410.20 423.09 L410.70 420.80 L411.20 420.80 L411.70 420.88 L412.20 421.71 L412.70 423.44 L413.20 422.76 L413.70 423.30 L414.20 425.80 L414.70 424.82 L415.20 426.25 L415.70 427.38 L416.20 428.30 L416.70 428.50 L417.20 426.93 L417.70 425.76 L418.20 425.36 L418.70 425.00 L419.20 424.06 L419.70 426.83 L420.20 426.70 L420.70 426.75 L421.20 426.70 L421.70 426.45 L422.20 425.15 L422.70 424.83 L423.20 425.44 L423.70 424.20 L424.25 423.33 L424.80 423.19 L425.35 425.19 L425.90 425.02 L426.45 423.72 L427.00 423.30 L427.55 423.65 L428.10 423.20 L428.65 424.20 L429.20 422.36 L429.75 422.71 L430.30 422.50 L430.80 423.60 L431.30 425.13 L431.80 424.25 L432.30 425.35 L432.80 425.80 L433.32 424.84 L433.85 424.18 L434.38 423.67 L434.90 423.83 L435.43 424.04 L435.95 422.10 L436.48 421.67 L437.00 421.70 L437.57 422.17 L438.13 423.69 L438.70 424.20 L439.20 425.33 L439.70 424.06 L440.20 426.02 L440.70 425.30 L441.20 426.70 L441.78 428.01 L442.36 427.15 L442.94 427.70 L443.52 428.69 L444.10 430.00 L444.68 428.44 L445.26 426.10 L445.84 425.69 L446.42 424.13 L447.00 422.50 L447.50 421.74 L448.00 421.06 L448.50 420.77 L449.00 418.48 L449.50 418.30 L450.00 417.77 L450.50 417.21 L451.00 416.70M453.70 421.70 L454.20 420.66 L454.70 423.69 L455.20 423.46 L455.70 424.33 L456.20 425.80 L456.70 425.24 L457.20 425.57 L457.70 425.62 L458.20 425.60 L458.70 425.00 L459.20 423.87 L459.70 424.63 L460.20 423.88 L460.70 422.65 L461.20 422.50 L461.70 423.32 L462.20 424.91 L462.70 425.41 L463.20 426.49 L463.70 426.70 L464.20 426.30 L464.70 426.73 L465.20 427.20 L465.70 425.11 L466.20 424.20 L466.75 423.72 L467.30 427.69 L467.85 426.59 L468.40 426.82 L468.95 426.90 L469.50 430.00 L470.00 429.38 L470.50 428.99 L471.00 427.90 L471.50 425.66 L472.00 425.00 L472.58 425.96 L473.16 424.25 L473.74 423.45 L474.32 423.70 L474.90 423.30 L475.42 424.54 L475.95 425.44 L476.48 426.81 L477.00 427.50 L477.50 425.87 L478.00 429.59 L478.50 428.01 L479.00 429.45 L479.50 429.20 L480.08 427.48 L480.66 427.35 L481.24 426.04 L481.82 423.78 L482.40 424.20 L482.98 425.05 L483.56 425.77 L484.14 424.70 L484.72 424.31 L485.30 426.70 L485.87 425.42 L486.43 424.54 L487.00 424.70 L487.57 423.88 L488.13 424.65 L488.70 422.50 L489.20 423.92 L489.70 423.95 L490.20 425.17 L490.70 423.27 L491.20 426.70 L491.73 426.42 L492.27 426.94 L492.80 428.30 L493.37 426.53 L493.93 425.25 L494.50 423.30 L495.00 423.67 L495.50 424.50 L496.00 423.22 L496.50 424.30 L497.00 424.20 L497.54 423.84 L498.07 423.73 L498.61 423.76 L499.14 422.98 L499.68 423.18 L500.21 422.71 L500.75 422.50 L501.34 423.92 L501.93 423.40 L502.52 424.27 L503.11 426.84 L503.70 425.00 L504.23 426.96 L504.77 428.26 L505.30 429.20 L505.95 427.67 L506.60 424.20 L507.12 424.74 L507.65 427.74 L508.18 429.22 L508.70 430.00 L509.21 428.72 L509.73 427.53 L510.24 425.68 L510.75 423.30 L511.30 423.14 L511.85 420.26 L512.40 419.60 L512.98 421.41 L513.56 421.95 L514.14 424.97 L514.72 425.40 L515.30 426.70 L515.82 424.48 L516.35 424.70 L516.88 422.65 L517.40 422.50 L517.98 423.72 L518.56 422.88 L519.14 421.55 L519.72 423.51 L520.30 424.20 L520.87 425.39 L521.43 425.03 L522.00 424.43 L522.57 425.85 L523.13 426.05 L523.70 425.80 L524.25 426.57 L524.80 425.51 L525.35 424.48 L525.90 422.89 L526.45 423.31 L527.00 422.50 L527.50 423.77 L528.00 424.51 L528.50 425.88 L529.00 425.44 L529.50 427.50 L530.00 428.17 L530.50 427.83 L531.00 428.30 L531.50 428.05 L532.00 428.30 L532.50 428.03 L533.00 428.53 L533.50 429.00 L534.00 428.01 L534.50 428.30 L535.00 428.27 L535.50 426.97 L536.00 427.71 L536.50 427.04 L537.00 426.70 L537.57 424.72 L538.13 426.08 L538.70 424.20M539.90 416.70 L540.55 417.15 L541.20 419.20M542.00 423.30 L542.52 423.17 L543.05 421.73 L543.58 421.15 L544.10 422.50 L544.62 423.91 L545.15 422.90 L545.68 423.12 L546.20 425.80 L546.71 426.13 L547.23 425.46 L547.74 427.19 L548.25 427.90M549.10 423.30 L549.68 425.78 L550.26 424.63 L550.84 426.14 L551.42 427.16 L552.00 427.50 L552.57 426.62 L553.13 425.19 L553.70 424.20 L554.25 425.68 L554.80 424.39 L555.35 424.92 L555.90 424.83 L556.45 423.72 L557.00 425.00 L557.57 425.85 L558.13 426.18 L558.70 426.70 L559.20 426.60 L559.70 425.96 L560.20 426.06 L560.70 422.29 L561.20 423.30 L561.71 421.98 L562.23 421.23 L562.74 420.05 L563.25 420.00 L563.80 421.77 L564.35 422.73 L564.90 424.20 L565.55 425.57 L566.20 426.70 L566.70 424.91 L567.20 425.17 L567.70 425.62 L568.20 424.94 L568.70 425.00 L569.20 424.96 L569.70 425.90 L570.20 426.25 L570.70 426.05 L571.20 427.50 L571.71 429.30 L572.23 427.52 L572.74 429.02 L573.25 429.28 L573.76 429.92 L574.27 428.87 L574.79 428.80 L575.30 430.00 L575.87 429.69 L576.43 428.83 L577.00 425.80 L577.57 424.87 L578.13 426.02 L578.70 425.80 L579.25 425.32 L579.80 425.29 L580.35 425.77 L580.90 424.40 L581.45 427.49 L582.00 425.00M582.80 420.00 L583.30 421.14 L583.80 421.84 L584.30 421.26 L584.80 419.51 L585.30 421.70 L585.82 422.53 L586.35 422.46 L586.88 423.97 L587.40 424.20 L588.05 423.65 L588.70 423.30M600.50 427.00 L601.03 428.26 L601.57 427.55 L602.10 429.00 L602.62 427.48 L603.15 426.60 L603.68 424.73 L604.20 424.20 L604.70 423.95 L605.20 425.07 L605.70 426.39 L606.20 424.65 L606.70 425.00 L607.21 426.16 L607.73 424.84 L608.24 425.87 L608.75 426.70 L609.30 428.36 L609.85 429.95 L610.40 430.80 L610.92 428.44 L611.45 428.43 L611.98 426.58 L612.50 425.00 L613.00 425.66 L613.50 424.83 L614.00 423.99 L614.50 422.65 L615.00 422.50 L615.58 422.23 L616.16 420.74 L616.74 420.27 L617.32 418.86 L617.90 420.00 L618.42 419.67 L618.95 420.52 L619.48 422.38 L620.00 423.30 L620.57 424.52 L621.13 424.37 L621.70 426.70 L622.20 427.43 L622.70 428.70 L623.20 429.98 L623.70 429.89 L624.20 430.80 L624.75 429.61 L625.30 427.70 L625.85 427.47 L626.40 423.88 L626.95 424.09 L627.50 422.50 L628.00 420.60 L628.50 424.34 L629.00 423.80 L629.50 421.27 L630.00 423.30 L630.50 423.51 L631.00 423.41 L631.50 423.77 L632.00 425.65 L632.50 426.70 L633.02 426.31 L633.55 428.42 L634.08 427.43 L634.60 428.30M635.80 423.30 L636.32 423.56 L636.85 425.72 L637.38 427.40 L637.90 428.30 L638.44 427.95 L638.99 426.60 L639.53 423.76 L640.07 423.28 L640.61 422.77 L641.16 421.12 L641.70 420.80 L642.25 421.87 L642.80 421.32 L643.35 421.98 L643.90 422.13 L644.45 422.91 L645.00 423.30 L645.50 423.14 L646.00 427.51 L646.50 426.33 L647.00 427.36 L647.50 429.20 L648.00 426.27 L648.50 426.43 L649.00 423.95 L649.50 424.12 L650.00 422.50 L650.52 423.12 L651.05 422.18 L651.58 420.82 L652.10 420.80M653.30 426.70 L653.80 429.13 L654.30 429.16 L654.80 430.61 L655.30 432.02 L655.80 433.30 L656.37 431.20 L656.93 430.33 L657.50 428.30 L658.00 427.04 L658.50 426.40 L659.00 428.87 L659.50 427.00 L660.00 427.50 L660.50 427.33 L661.00 428.10 L661.50 427.55 L662.00 427.08 L662.50 428.30 L663.00 426.95 L663.50 425.13 L664.00 425.29 L664.50 423.25 L665.00 422.50 L665.50 422.76 L666.00 424.17 L666.50 422.62 L667.00 423.17 L667.50 425.00 L668.00 424.97 L668.50 424.79 L669.00 423.09 L669.50 421.72 L670.00 421.70 L670.50 423.27 L671.00 423.15 L671.50 424.09 L672.00 422.08 L672.50 424.20 L673.00 424.39 L673.50 423.91 L674.00 424.18 L674.50 425.98 L675.00 425.80 L675.52 427.48 L676.05 427.47 L676.58 428.71 L677.10 430.00 L677.62 429.53 L678.15 427.22 L678.68 424.85 L679.20 423.30 L679.71 425.41 L680.23 426.73 L680.74 427.19 L681.25 430.00 L681.76 428.08 L682.27 427.34 L682.79 426.19 L683.30 424.20 L683.80 422.94 L684.30 423.11 L684.80 423.13 L685.30 422.13 L685.80 423.30 L686.39 423.76 L686.98 422.69 L687.57 422.95 L688.16 419.35 L688.75 420.80 L689.30 421.47 L689.85 425.19 L690.40 425.00 L691.05 426.24 L691.70 430.00 L692.20 427.53 L692.70 428.50 L693.20 428.86 L693.70 427.19 L694.20 425.80 L694.75 424.80 L695.30 426.01 L695.85 425.75 L696.40 425.49 L696.95 425.46 L697.50 425.00 L698.05 425.17 L698.60 424.92 L699.15 424.55 L699.70 423.73 L700.25 422.11 L700.80 421.70 L701.37 421.15 L701.93 424.37 L702.50 425.00 L703.07 425.89 L703.63 431.47 L704.20 431.70 L704.70 429.32 L705.20 427.37 L705.70 426.03 L706.20 426.67 L706.70 425.00 L707.20 425.09 L707.70 425.24 L708.20 424.76 L708.70 423.66 L709.20 424.20 L709.70 425.57 L710.20 424.89 L710.70 424.84 L711.20 427.63 L711.70 427.50 L712.21 426.71 L712.73 424.16 L713.24 423.51 L713.75 422.50M714.60 412.10 L715.40 413.30M715.80 422.50 L716.30 424.56 L716.80 425.64 L717.30 425.02 L717.80 428.11 L718.30 428.30 L718.87 426.83 L719.43 430.03 L720.00 430.80 L720.57 429.76 L721.13 427.95 L721.70 426.70 L722.20 426.29 L722.70 424.26 L723.20 425.07 L723.70 425.13 L724.20 424.20 L724.73 425.03 L725.27 427.64 L725.80 429.20 L726.32 428.19 L726.85 425.49 L727.38 426.10 L727.90 425.80 L728.42 425.48 L728.95 422.76 L729.48 423.34 L730.00 422.50 L730.50 423.63 L731.00 423.04 L731.50 424.79 L732.00 426.64 L732.50 426.70 L733.00 427.65 L733.50 426.45 L734.00 428.55 L734.50 428.27 L735.00 428.30 L735.50 427.74 L736.00 428.31 L736.50 426.96 L737.00 425.98 L737.50 425.00 L738.00 426.00 L738.50 425.90 L739.00 426.60 L739.50 425.53 L740.00 425.80 L740.55 424.08 L741.10 426.91 L741.65 426.11 L742.20 425.73 L742.75 425.17 L743.30 425.00 L743.80 425.58 L744.30 426.41 L744.80 426.13 L745.30 428.32 L745.80 428.30 L746.30 428.05 L746.80 426.81 L747.30 427.57 L747.80 426.72 L748.30 426.70 L748.89 427.67 L749.48 429.18 L750.07 432.09 L750.66 429.75 L751.25 431.70 L751.76 430.38 L752.27 428.98 L752.79 427.05 L753.30 425.00 L753.80 425.82 L754.30 423.62 L754.80 423.20 L755.30 422.99 L755.80 422.50 L756.30 422.12 L756.80 425.16 L757.30 423.91 L757.80 426.34 L758.30 426.70 L758.87 428.86 L759.43 428.15 L760.00 430.00 L760.50 428.68 L761.00 427.50 L761.50 428.04 L762.00 425.59 L762.50 424.20 L763.04 422.39 L763.57 424.66 L764.11 424.39 L764.64 421.45 L765.18 420.56 L765.71 425.06 L766.25 422.50 L766.84 422.91 L767.43 421.28 L768.02 424.46 L768.61 425.12 L769.20 424.20 L769.70 422.73 L770.20 426.65 L770.70 426.81 L771.20 426.82 L771.70 427.50 L772.25 427.35 L772.80 428.81 L773.35 428.22 L773.90 429.57 L774.45 429.69 L775.00 430.40 L775.50 429.26 L776.00 429.40 L776.50 429.05 L777.00 428.23 L777.50 426.70 L778.00 427.09 L778.50 428.20 L779.00 425.57 L779.50 426.70" fill="none" stroke="#ff0000" stroke-width="2.5" stroke-linejoin="round"/>
<line x1="114" y1="445" x2="780" y2="445" stroke="#858585" stroke-width="1.2"/>
<g stroke="#747474" stroke-width="1.1"><line x1="144.00" y1="445" x2="144.00" y2="450" /><line x1="185.75" y1="445" x2="185.75" y2="450" /><line x1="227.50" y1="445" x2="227.50" y2="450" /><line x1="269.25" y1="445" x2="269.25" y2="450" /><line x1="311.00" y1="445" x2="311.00" y2="450" /><line x1="352.75" y1="445" x2="352.75" y2="450" /><line x1="394.50" y1="445" x2="394.50" y2="450" /><line x1="436.25" y1="445" x2="436.25" y2="450" /><line x1="478.00" y1="445" x2="478.00" y2="450" /><line x1="519.75" y1="445" x2="519.75" y2="450" /><line x1="561.50" y1="445" x2="561.50" y2="450" /><line x1="603.25" y1="445" x2="603.25" y2="450" /><line x1="645.00" y1="445" x2="645.00" y2="450" /><line x1="686.75" y1="445" x2="686.75" y2="450" /><line x1="728.50" y1="445" x2="728.50" y2="450" /><line x1="770.25" y1="445" x2="770.25" y2="450" /></g>
<g font-family="Liberation Sans, sans-serif" font-size="8.6" fill="#929292" text-anchor="middle"><text x="143.60" y="459" textLength="17.4" lengthAdjust="spacingAndGlyphs">4400</text><text x="185.35" y="459" textLength="17.4" lengthAdjust="spacingAndGlyphs">4600</text><text x="227.10" y="459" textLength="17.4" lengthAdjust="spacingAndGlyphs">4800</text><text x="268.85" y="459" textLength="17.4" lengthAdjust="spacingAndGlyphs">5000</text><text x="310.60" y="459" textLength="17.4" lengthAdjust="spacingAndGlyphs">5200</text><text x="352.35" y="459" textLength="17.4" lengthAdjust="spacingAndGlyphs">5400</text><text x="394.10" y="459" textLength="17.4" lengthAdjust="spacingAndGlyphs">5600</text><text x="435.85" y="459" textLength="17.4" lengthAdjust="spacingAndGlyphs">5800</text><text x="477.60" y="459" textLength="17.4" lengthAdjust="spacingAndGlyphs">6000</text><text x="519.35" y="459" textLength="17.4" lengthAdjust="spacingAndGlyphs">6200</text><text x="561.10" y="459" textLength="17.4" lengthAdjust="spacingAndGlyphs">6400</text><text x="602.85" y="459" textLength="17.4" lengthAdjust="spacingAndGlyphs">6600</text><text x="644.60" y="459" textLength="17.4" lengthAdjust="spacingAndGlyphs">6800</text><text x="686.35" y="459" textLength="17.4" lengthAdjust="spacingAndGlyphs">7000</text><text x="728.10" y="459" textLength="17.4" lengthAdjust="spacingAndGlyphs">7200</text><text x="769.85" y="459" textLength="17.4" lengthAdjust="spacingAndGlyphs">7400</text></g>
<text x="446.5" y="471.6" textLength="49" lengthAdjust="spacingAndGlyphs" font-family="Liberation Sans, sans-serif" font-size="10.3" font-weight="bold" fill="#ff0000" text-anchor="middle">Angstroms</text>
</svg>
</body></html>
